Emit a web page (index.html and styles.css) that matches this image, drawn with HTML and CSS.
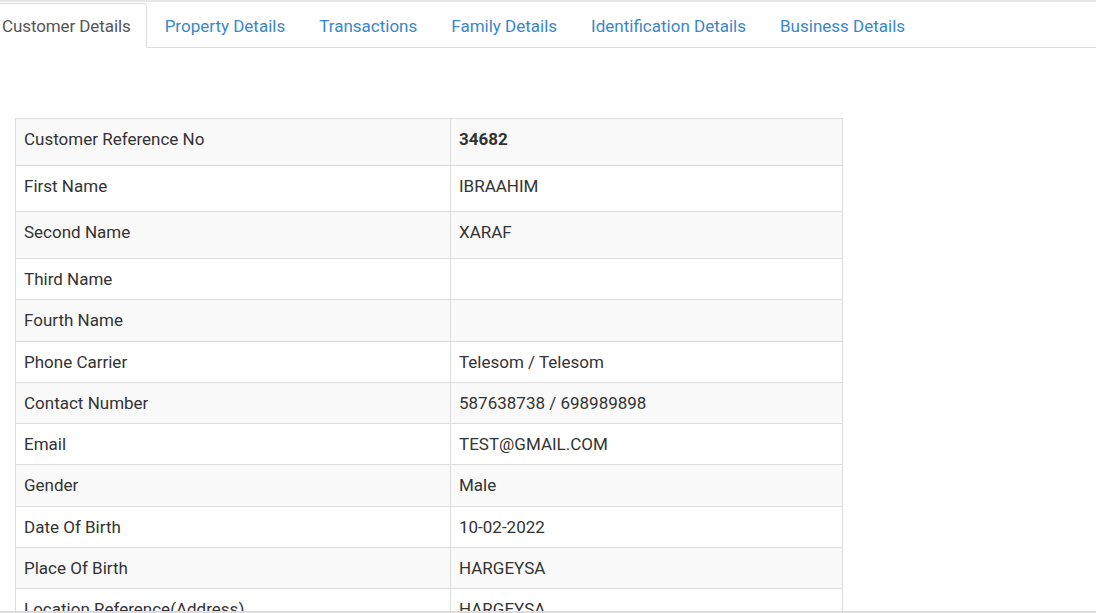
FILE: index.html
```html
<!DOCTYPE html>
<html lang="en">

<head>
    <meta charset="UTF-8">
    <meta name="viewport" content="width=device-width, initial-scale=1">
    <title>Customer Details</title>
    <link rel="stylesheet" href="styles.css">
</head>
<body>
    <div class="page">
        <div class="topbar"></div>
        <ul class="nav-tabs">
            <li class="active"><a href="#">Customer Details</a></li>
            <li><a href="#">Property Details</a></li>
            <li><a href="#">Transactions</a></li>
            <li><a href="#">Family Details</a></li>
            <li><a href="#">Identification Details</a></li>
            <li><a href="#">Business Details</a></li>
        </ul>

        <div class="tab-content">
            <table class="details">
                <tr class="tall">
                    <td class="label">Customer Reference No</td>
                    <td><b>34682</b></td>
                </tr>
                <tr class="tall">
                    <td class="label">First Name</td>
                    <td>IBRAAHIM</td>
                </tr>
                <tr class="tall">
                    <td class="label">Second Name</td>
                    <td>XARAF</td>
                </tr>
                <tr>
                    <td class="label">Third Name</td>
                    <td></td>
                </tr>
                <tr>
                    <td class="label">Fourth Name</td>
                    <td></td>
                </tr>
                <tr>
                    <td class="label">Phone Carrier</td>
                    <td>Telesom / Telesom</td>
                </tr>
                <tr>
                    <td class="label">Contact Number</td>
                    <td>587638738 / 698989898</td>
                </tr>
                <tr>
                    <td class="label">Email</td>
                    <td>TEST@GMAIL.COM</td>
                </tr>
                <tr>
                    <td class="label">Gender</td>
                    <td>Male</td>
                </tr>
                <tr>
                    <td class="label">Date Of Birth</td>
                    <td>10-02-2022</td>
                </tr>
                <tr>
                    <td class="label">Place Of Birth</td>
                    <td>HARGEYSA</td>
                </tr>
                <tr>
                    <td class="label">Location Reference(Address)</td>
                    <td>HARGEYSA</td>
                </tr>
                <tr>
                    <td class="label">Registration Date</td>
                    <td>10-02-2022</td>
                </tr>
            </table>
        </div>
    </div>
</body>
</html>
```

FILE: styles.css
```css
body {
    font-family: Roboto, "Liberation Sans", sans-serif;
    font-size: 17px;
    color: #333;
    margin: 0;
    background: #fff;
}

.page {
    height: 611px;
    overflow: hidden;
    border-bottom: 2px solid #e0dadc;
}

.topbar {
    height: 2px;
    background: #e6e6e6;
}

.nav-tabs {
    display: flex;
    list-style: none;
    margin: 0 0 0 -14px;
    padding: 1px 0 0;
    border-bottom: 1px solid #ddd;
}

.nav-tabs li {
    margin-bottom: -1px;
    margin-right: 2px;
}

.nav-tabs a {
    display: block;
    padding: 11px 15px 10px;
    line-height: 22px;
    color: #3a87c8;
    text-decoration: none;
    border: 1px solid transparent;
    border-radius: 4px 4px 0 0;
}

.nav-tabs .active a {
    color: #555;
    background: #fff;
    border-color: #ddd #ddd transparent;
    letter-spacing: -0.1px;
}

.tab-content {
    padding: 70px 15px 0;
}

.details {
    width: 828px;
    border-collapse: collapse;
}

.details td {
    border: 1px solid #ddd;
    padding: 8px;
    line-height: 1.42857;
    vertical-align: top;
}

.details td.label {
    width: 418px;
}

.details tr:nth-child(odd) {
    background: #f9f9f9;
}

.details tr.tall td {
    padding-bottom: 13.4px;
}
```
